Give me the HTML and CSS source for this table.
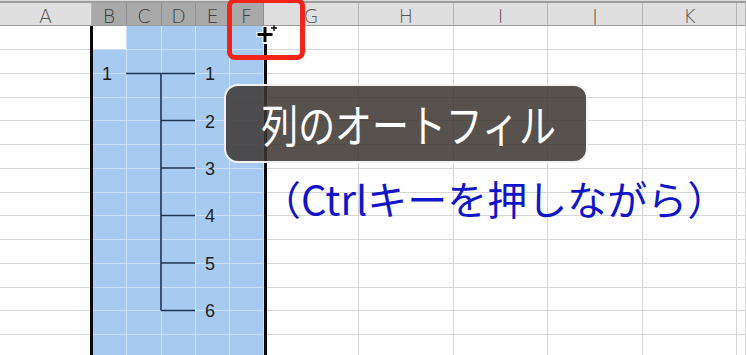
FILE: index.html
```html
<!DOCTYPE html>
<html lang="ja">
<head>
<meta charset="utf-8">
<title>列のオートフィル</title>
<link rel="stylesheet" href="styles.css">
</head>
<body>
<div class="sheet">
  <div class="topline"></div>
  <div class="row head">
    <div class="ch">A</div><div class="ch on">B</div><div class="ch on">C</div><div class="ch on">D</div><div class="ch on">E</div><div class="ch on">F</div><div class="ch">G</div><div class="ch">H</div><div class="ch">I</div><div class="ch">J</div><div class="ch">K</div><div class="ch"></div>
  </div>
  <div class="row first"><div class="c"></div><div class="c active"></div><div class="c s"></div><div class="c s"></div><div class="c s"></div><div class="c s"></div><div class="c"></div><div class="c"></div><div class="c"></div><div class="c"></div><div class="c"></div><div class="c"></div></div>
  <div class="row"><div class="c"></div><div class="c s"></div><div class="c s"></div><div class="c s"></div><div class="c s"></div><div class="c s"></div><div class="c"></div><div class="c"></div><div class="c"></div><div class="c"></div><div class="c"></div><div class="c"></div></div>
  <div class="row"><div class="c"></div><div class="c s"></div><div class="c s"></div><div class="c s"></div><div class="c s"></div><div class="c s"></div><div class="c"></div><div class="c"></div><div class="c"></div><div class="c"></div><div class="c"></div><div class="c"></div></div>
  <div class="row"><div class="c"></div><div class="c s"></div><div class="c s"></div><div class="c s"></div><div class="c s"></div><div class="c s"></div><div class="c"></div><div class="c"></div><div class="c"></div><div class="c"></div><div class="c"></div><div class="c"></div></div>
  <div class="row"><div class="c"></div><div class="c s"></div><div class="c s"></div><div class="c s"></div><div class="c s"></div><div class="c s"></div><div class="c"></div><div class="c"></div><div class="c"></div><div class="c"></div><div class="c"></div><div class="c"></div></div>
  <div class="row"><div class="c"></div><div class="c s"></div><div class="c s"></div><div class="c s"></div><div class="c s"></div><div class="c s"></div><div class="c"></div><div class="c"></div><div class="c"></div><div class="c"></div><div class="c"></div><div class="c"></div></div>
  <div class="row"><div class="c"></div><div class="c s"></div><div class="c s"></div><div class="c s"></div><div class="c s"></div><div class="c s"></div><div class="c"></div><div class="c"></div><div class="c"></div><div class="c"></div><div class="c"></div><div class="c"></div></div>
  <div class="row"><div class="c"></div><div class="c s"></div><div class="c s"></div><div class="c s"></div><div class="c s"></div><div class="c s"></div><div class="c"></div><div class="c"></div><div class="c"></div><div class="c"></div><div class="c"></div><div class="c"></div></div>
  <div class="row"><div class="c"></div><div class="c s"></div><div class="c s"></div><div class="c s"></div><div class="c s"></div><div class="c s"></div><div class="c"></div><div class="c"></div><div class="c"></div><div class="c"></div><div class="c"></div><div class="c"></div></div>
  <div class="row"><div class="c"></div><div class="c s"></div><div class="c s"></div><div class="c s"></div><div class="c s"></div><div class="c s"></div><div class="c"></div><div class="c"></div><div class="c"></div><div class="c"></div><div class="c"></div><div class="c"></div></div>
  <div class="row"><div class="c"></div><div class="c s"></div><div class="c s"></div><div class="c s"></div><div class="c s"></div><div class="c s"></div><div class="c"></div><div class="c"></div><div class="c"></div><div class="c"></div><div class="c"></div><div class="c"></div></div>
  <div class="row"><div class="c"></div><div class="c s"></div><div class="c s"></div><div class="c s"></div><div class="c s"></div><div class="c s"></div><div class="c"></div><div class="c"></div><div class="c"></div><div class="c"></div><div class="c"></div><div class="c"></div></div>
  <div class="row"><div class="c"></div><div class="c s"></div><div class="c s"></div><div class="c s"></div><div class="c s"></div><div class="c s"></div><div class="c"></div><div class="c"></div><div class="c"></div><div class="c"></div><div class="c"></div><div class="c"></div></div>
  <div class="row"><div class="c"></div><div class="c s"></div><div class="c s"></div><div class="c s"></div><div class="c s"></div><div class="c s"></div><div class="c"></div><div class="c"></div><div class="c"></div><div class="c"></div><div class="c"></div><div class="c"></div></div>

  <div class="tree">
    <svg class="tree-lines" width="746" height="355" viewBox="0 0 746 355">
      <g stroke="#1c3354" stroke-width="1.6" fill="none">
        <path d="M126 73.5H195"/>
        <path d="M161 73.5V310.5"/>
        <path d="M161 120.5H195"/>
        <path d="M161 168H195"/>
        <path d="M161 215.5H195"/>
        <path d="M161 263H195"/>
        <path d="M161 310.5H195"/>
      </g>
    </svg>
    <span class="num n-root">1</span>
    <span class="num n1">1</span>
    <span class="num n2">2</span>
    <span class="num n3">3</span>
    <span class="num n4">4</span>
    <span class="num n5">5</span>
    <span class="num n6">6</span>
  </div>

  <div class="sel-outline"></div>

  <svg class="fill-cursor" width="24" height="24" viewBox="0 0 24 24">
    <path d="M6.5 2h5v6h6v5h-6v6h-5v-6h-6V8h6z" fill="#fff"/>
    <path d="M7.5 3h3v6h6v3h-6v6h-3v-6h-6V9h6z" fill="#000"/>
    <path d="M18 1v6M15 4h6" stroke="#000" stroke-width="1.3"/>
  </svg>

  <div class="red-box"></div>

  <div class="caption"><span class="caption-text">列のオートフィル</span></div>

  <div class="note">（Ctrlキーを押しながら）</div>
</div>
</body>
</html>
```

FILE: styles.css
```css
html, body {
  margin: 0;
  padding: 0;
  background: #ffffff;
}

body {
  width: 746px;
  height: 355px;
  overflow: hidden;
  font-family: "Liberation Sans", Arial, sans-serif;
}

.sheet {
  position: relative;
  width: 746px;
  height: 355px;
  overflow: hidden;
  display: flex;
  flex-direction: column;
}

.topline {
  height: 3px;
  flex: none;
  background: linear-gradient(#dcdcdc 0 1px, #9d9d9d 1px 3px);
}

.row {
  display: grid;
  grid-template-columns: 92px 35px 35px 34px 34px 34px 95px 95px 94px 95px 94px 1fr;
  height: 23.75px;
  flex: none;
}

.row.first {
  height: 24px;
}

.row.head {
  height: 23px;
}

.ch {
  box-sizing: border-box;
  background: #dfdfdf;
  border-right: 1px solid #b4b4b4;
  border-bottom: 1px solid #9a9a9a;
  font-family: "DejaVu Sans", sans-serif;
  font-weight: 200;
  font-size: 19px;
  line-height: 26px;
  color: #555555;
  text-align: center;
  overflow: hidden;
}

.ch.on {
  background: #a9a9a9;
  border-right-color: #8f8f8f;
  color: #3c3c3c;
}

.c {
  box-sizing: border-box;
  background: #ffffff;
  border-right: 1px solid #d6d6d6;
  border-bottom: 1px solid #d6d6d6;
}

.c.s {
  background: #a7cbf0;
  border-right-color: #cbe0f6;
  border-bottom-color: #cbe0f6;
}

.c.active {
  background: #ffffff;
  border-right-color: #cbe0f6;
  border-bottom-color: #cbe0f6;
}

/* tree diagram over the selection */
.tree {
  position: absolute;
  left: 0;
  top: 0;
  width: 746px;
  height: 355px;
  pointer-events: none;
}

.tree-lines {
  position: absolute;
  left: 0;
  top: 0;
}

.num {
  position: absolute;
  width: 20px;
  height: 20px;
  line-height: 20px;
  text-align: center;
  font-family: "Liberation Sans", Arial, sans-serif;
  font-size: 18px;
  color: #1e1e1e;
}

.n-root { left: 97px; top: 64px; }
.n1 { left: 200px; top: 64px; }
.n2 { left: 200px; top: 112px; }
.n3 { left: 200px; top: 159px; }
.n4 { left: 200px; top: 206px; }
.n5 { left: 200px; top: 254px; }
.n6 { left: 200px; top: 301px; }

/* selection outline */
.sel-outline {
  position: absolute;
  left: 90px;
  top: 26px;
  width: 171px;
  height: 340px;
  border-left: 3px solid #0a0a0a;
}

.sel-outline::after {
  content: "";
  position: absolute;
  right: -3px;
  top: 18px;
  bottom: 0;
  width: 3px;
  background: #0a0a0a;
}

.fill-cursor {
  position: absolute;
  left: 256px;
  top: 24px;
}

.red-box {
  position: absolute;
  left: 227px;
  top: -2px;
  width: 78px;
  height: 62px;
  box-sizing: border-box;
  border: 5px solid #f2231b;
  border-radius: 8px;
}

.caption {
  position: absolute;
  left: 224px;
  top: 84px;
  width: 364px;
  height: 79px;
  box-sizing: border-box;
  border: 2px solid #f2f2f2;
  border-radius: 14px;
  background: rgba(60, 54, 50, 0.86);
  display: flex;
  align-items: center;
  justify-content: center;
  padding-left: 6px;
}

.caption-text {
  display: inline-block;
  font-family: "Noto Sans CJK JP", "Noto Sans CJK SC", sans-serif;
  font-size: 45px;
  line-height: 1;
  color: #ffffff;
  white-space: nowrap;
  transform: scaleX(0.82);
}

.note {
  position: absolute;
  left: 261px;
  top: 178px;
  font-family: "Noto Sans CJK JP", "Noto Sans CJK SC", sans-serif;
  font-size: 40px;
  line-height: 1;
  color: #1016c8;
  white-space: nowrap;
}
```
